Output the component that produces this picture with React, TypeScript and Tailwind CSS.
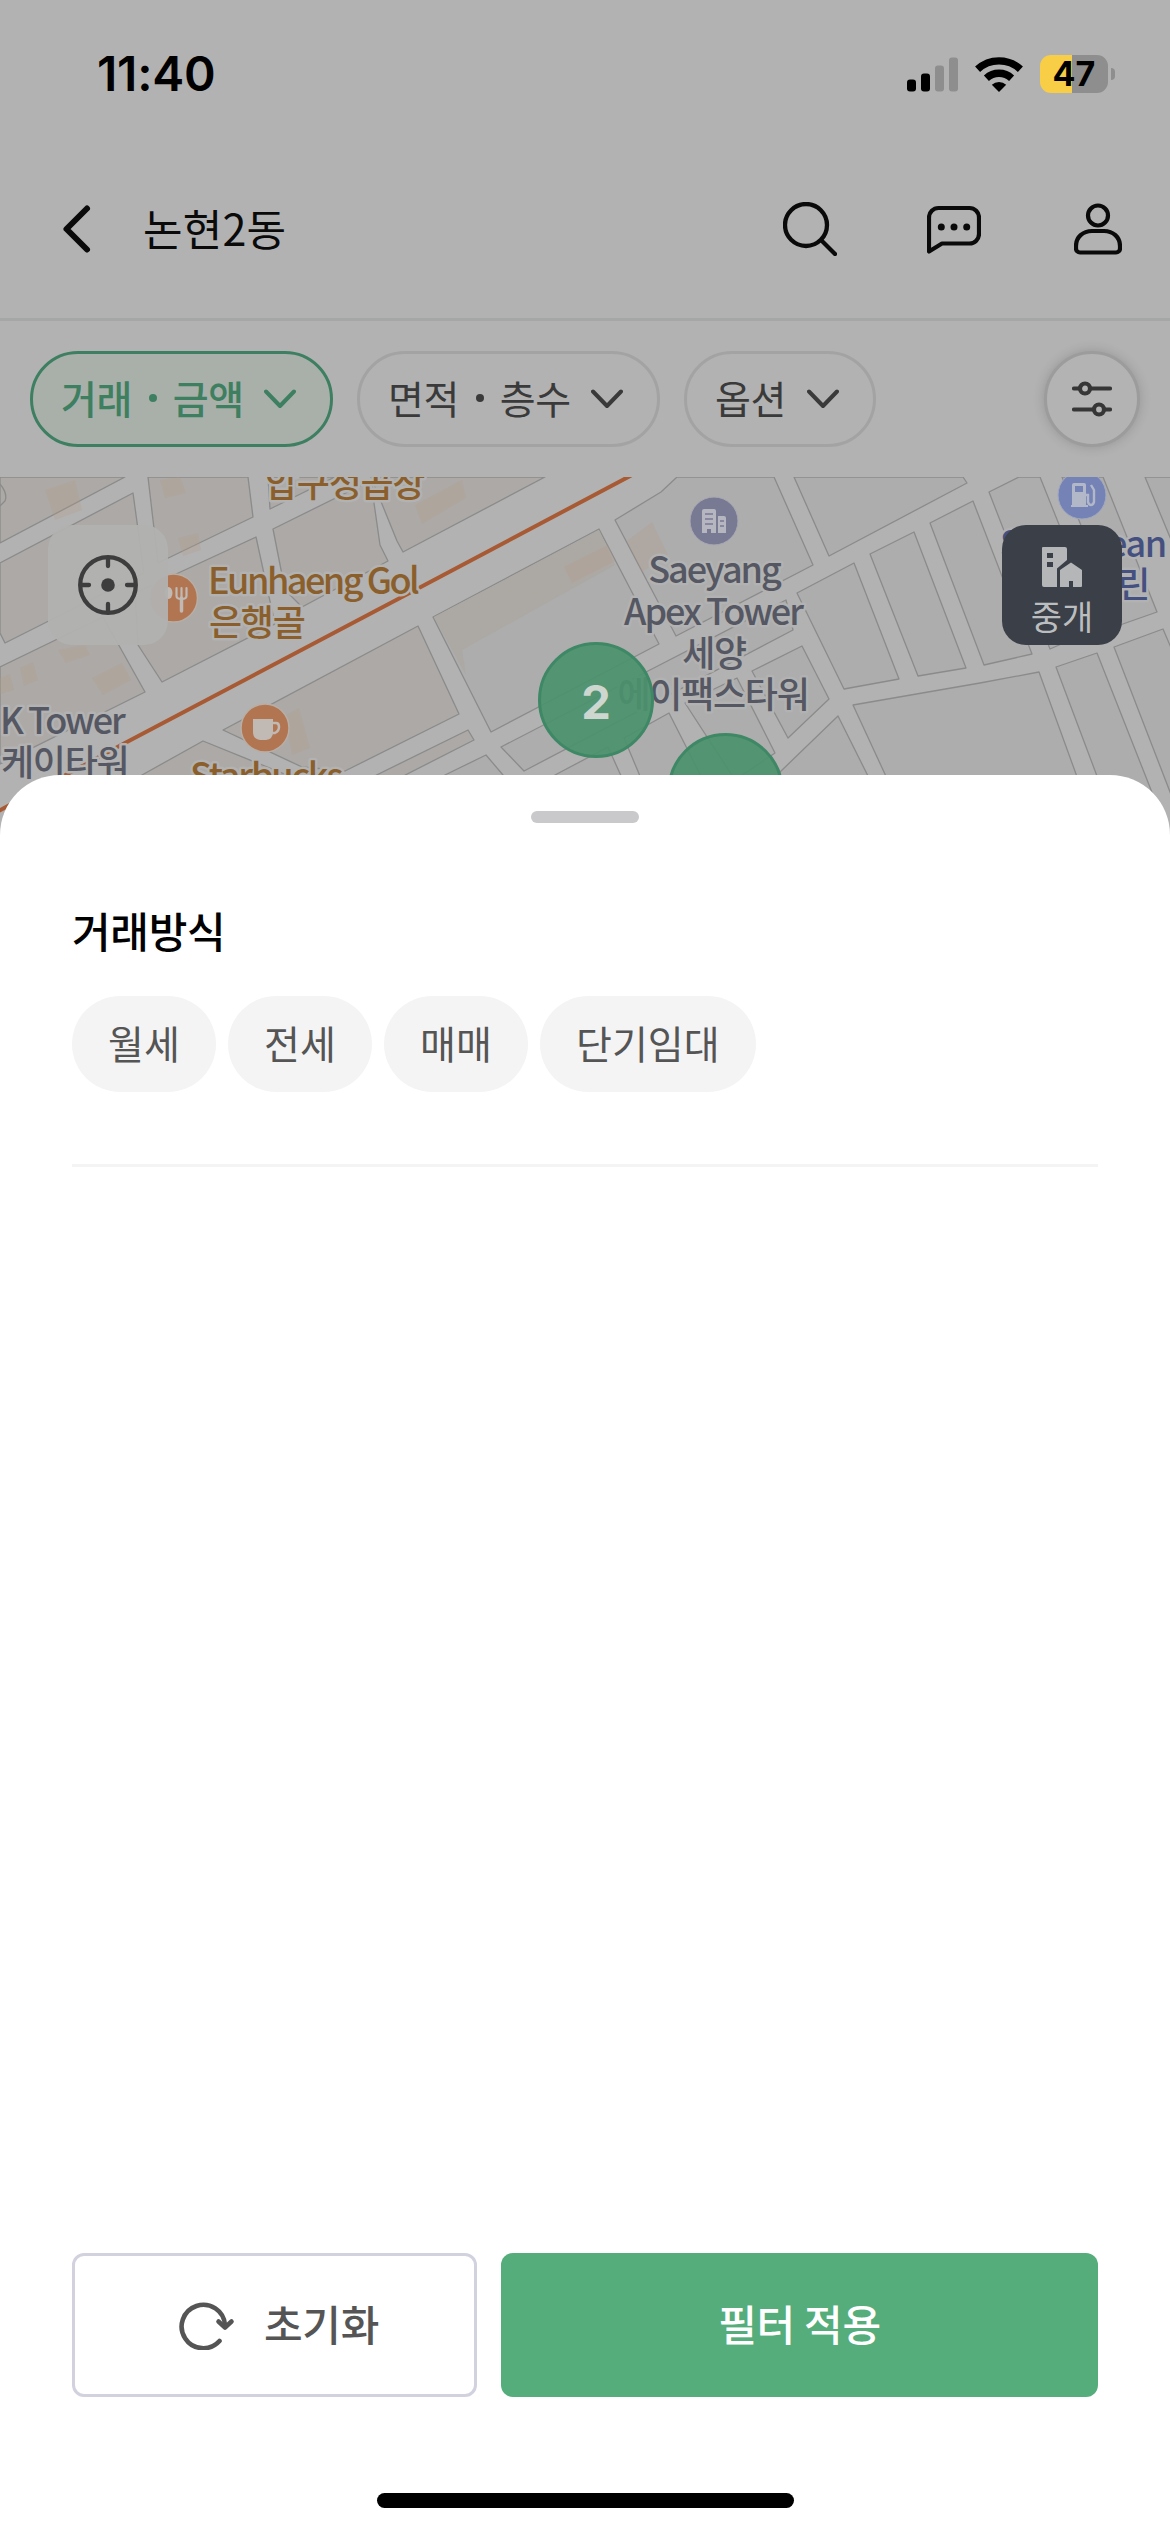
import React from "react";

const KR = "font-['Noto_Sans_CJK_KR','Noto_Sans',sans-serif]";

function StatusBar() {
  return (
    <div className="flex h-[148px] items-center justify-between pr-[55px] pl-[97px]">
      <span className="font-['Inter',sans-serif] text-[48px] leading-none font-semibold tracking-[-0.2px] text-black">
        11:40
      </span>
      <div className="flex items-center">
        <svg width="52" height="36" viewBox="0 0 52 36" className="mr-4">
          <rect x="0" y="23.5" width="9" height="12" rx="3" fill="#000" />
          <rect x="14" y="17.5" width="9" height="18" rx="3" fill="#000" />
          <rect x="28" y="9.5" width="9" height="26" rx="3" fill="#8e8e8e" />
          <rect x="42" y="1.5" width="9" height="34" rx="3" fill="#8e8e8e" />
        </svg>
        <svg width="48" height="36" viewBox="0 0 48 36" className="mr-[17px]">
          <g fill="none" stroke="#000" strokeWidth="7.4">
            <path d="M2.6 13.3a31.5 31.5 0 0 1 42.8 0" />
            <path d="M11.4 22.2a18.6 18.6 0 0 1 25.2 0" />
          </g>
          <path d="M24 36l-7.2-7.3a10.6 10.6 0 0 1 14.4 0z" fill="#000" />
        </svg>
        <div className="flex items-center">
          <div className="flex h-[38px] w-[68px] items-center justify-center rounded-[11px] bg-[linear-gradient(to_right,#f7ce46_32px,#8e8e8e_32px)]">
            <span className="font-['Inter',sans-serif] text-[34px] leading-none font-bold tracking-[0.2px] text-black">
              47
            </span>
          </div>
          <div className="ml-[3px] h-[12px] w-[4px] rounded-r-full bg-[#8e8e8e]" />
        </div>
      </div>
    </div>
  );
}

function NavBar() {
  return (
    <div className="flex h-[173px] items-start border-b-[3px] border-[#a5a7a7] pt-[54px] pl-[62px]">
      <svg width="30" height="54" viewBox="0 0 30 54" fill="none" stroke="#0a0a0a" strokeWidth="6" strokeLinecap="round" strokeLinejoin="round">
        <path d="M25 6.500L4.500 27L25 47.500" />
      </svg>
      <h1 className={`${KR} ml-[51px] h-[54px] text-[43px] leading-[50px] tracking-[0.2px] text-[#0a0a0a]`}>
        논현2동
      </h1>
      <div className="ml-auto flex pr-[48px]">
        <svg width="54" height="54" viewBox="0 0 54 54" fill="none" stroke="#0a0a0a" strokeWidth="4.300" strokeLinecap="round">
          <circle cx="23" cy="23" r="21" />
          <path d="M38.500 38.500L52 52" />
        </svg>
        <svg width="54" height="54" viewBox="0 0 54 54" fill="none" stroke="#0a0a0a" strokeWidth="4.200" strokeLinejoin="round" className="ml-[90px]">
          <path d="M2 49.500V15.500A9.500 9.500 0 0 1 11.500 6H42.500A9.500 9.500 0 0 1 52 15.500V32A9.500 9.500 0 0 1 42.500 41.500H15z" />
          <g fill="#0a0a0a" stroke="none">
            <circle cx="14.300" cy="25" r="3.500" />
            <circle cx="27" cy="25" r="3.500" />
            <circle cx="39.700" cy="25" r="3.500" />
          </g>
        </svg>
        <svg width="48" height="54" viewBox="0 0 48 54" fill="none" stroke="#0a0a0a" strokeWidth="4.200" strokeLinejoin="round" className="ml-[93px]">
          <circle cx="24" cy="13.500" r="10" />
          <path d="M2 44C2 35 9 29 18 29H30C39 29 46 35 46 44V46.500A4 4 0 0 1 42 50.500H6A4 4 0 0 1 2 46.500z" />
        </svg>
      </div>
    </div>
  );
}

function Chevron() {
  return (
    <svg width="32" height="20" viewBox="0 0 32 20" fill="none" stroke="currentColor" strokeWidth="4" strokeLinecap="round" strokeLinejoin="round">
      <path d="M2 2.500L16 17L30 2.500" />
    </svg>
  );
}

function FilterBar() {
  return (
    <div className={`${KR} flex h-[156px] items-start pt-[30px] pl-[30px] text-[39px] font-medium`}>
      <button className="flex h-[96px] w-[303px] items-center justify-between rounded-full border-[3px] border-[#3d7f60] bg-[#a9b0aa] pr-[34px] pl-[28px] text-[#3d7f60]">
        <span className="flex items-center pb-[4px] leading-none tracking-[-0.5px]">
          거래<i className="mt-[2px] mr-[16px] ml-[17px] h-[8px] w-[8px] rounded-full bg-[#3d7f60]" />금액
        </span>
        <Chevron />
      </button>
      <button className="ml-[24px] flex h-[96px] w-[303px] items-center justify-between rounded-full border-[3px] border-[#a3a3a3] pr-[34px] pl-[28px] font-normal text-[#3a3a3a]">
        <span className="flex items-center pb-[4px] leading-none tracking-[-0.5px]">
          면적<i className="mt-[2px] mr-[16px] ml-[17px] h-[8px] w-[8px] rounded-full bg-[#3a3a3a]" />층수
        </span>
        <Chevron />
      </button>
      <button className="ml-[24px] flex h-[96px] w-[192px] items-center justify-between rounded-full border-[3px] border-[#a3a3a3] pr-[34px] pl-[28px] font-normal text-[#3a3a3a]">
        <span className="pb-[4px] leading-none tracking-[-0.5px]">옵션</span>
        <Chevron />
      </button>
      <button className="mr-[30px] ml-auto flex h-[96px] w-[96px] items-center justify-center rounded-full border-[3px] border-[#9c9c9c] bg-[#b3b3b3] shadow-[0_0_12px_rgba(0,0,0,0.16)]">
        <svg width="40" height="36" viewBox="0 0 40 36" fill="none" stroke="#363636" strokeWidth="4.200" strokeLinecap="round">
          <path d="M2 7.500H7M19 7.500H38M2 28.500H21M33 28.500H38" />
          <circle cx="13" cy="7.500" r="5" />
          <circle cx="27" cy="28.500" r="5" />
        </svg>
      </button>
    </div>
  );
}

const warmBlocks = [
  "0,477 125,477 0,543",
  "0,563 133,493 144,573 5,643 0,633",
  "148,477 248,477 253,517 158,563",
  "268,477 335,477 270,509",
  "371,477 545,477 403,552 397,541",
  "135,593 256,537 275,624 162,682 138,645",
  "273,529 372,480 374,503 380,545 388,561 302,607 285,590",
  "0,667 103,617 145,692 0,764",
  "223,730 418,626 459,714 345,771 302,767",
  "142,775 203,741 287,775 300,800 120,800",
  "340,793 468,730 474,740 370,793",
];

const greyBlocks = [
  "433,617 599,529 659,644 491,732",
  "615,520 661,492 677,477 774,477 813,565 676,636",
  "501,747 648,671 786,600 793,630 524,771",
  "752,671 802,646 829,699 788,738",
  "445,775 486,755 503,775 510,790 430,790",
  "555,775 608,747 622,778 622,790 540,790",
  "624,738 669,713 702,778 645,788",
  "685,703 737,678 775,753 735,780",
  "780,772 838,716 870,780 780,780",
  "853,705 980,683 1039,672 1080,785 890,785",
  "1056,667 1097,653 1155,800 1106,800",
  "1114,647 1163,629 1172,650 1172,797",
  "797,593 854,563 899,679 844,689",
  "870,554 914,532 966,668 918,676",
  "930,523 973,501 1032,654 984,665",
  "794,477 963,477 967,483 829,556",
  "989,492 1019,477 1040,477 1100,627 1050,649",
  "1062,477 1103,477 1157,612 1120,625",
  "1145,477 1172,477 1172,542",
];

const tints = [
  "45,490 75,480 82,510 55,520",
  "160,480 180,477 186,493 165,498",
  "178,538 198,533 201,550 183,556",
  "58,650 85,645 90,655 66,663",
  "92,678 122,663 131,680 103,695",
  "20,668 33,662 38,680 24,686",
  "0,678 10,674 14,690 0,694",
  "564,567 608,545 615,561 572,583",
  "415,505 462,480 466,498 422,524",
  "627,541 652,522 668,555 642,572",
  "285,716 299,708 310,748 292,755",
];

function PoiLabel(props: { x: number; y: number; color: string; anchor?: "start" | "middle" | "end"; spacing?: number; children: string }) {
  return (
    <text
      x={props.x}
      y={props.y}
      fill={props.color}
      stroke="#b2b2b2"
      strokeWidth="5"
      strokeLinejoin="round"
      paintOrder="stroke"
      textAnchor={props.anchor ?? "start"}
      letterSpacing={props.spacing ?? -1.3}
    >
      {props.children}
    </text>
  );
}

function MapView() {
  return (
    <div className="relative h-[383px] overflow-hidden bg-[#b2b2b2]">
      <svg width="1170" height="383" viewBox="0 477 1170 383" className={`${KR} block text-[36px] font-medium`}>
        <g stroke="#8b8b8b" strokeWidth="1.300" strokeLinejoin="round">
          {warmBlocks.map((p) => (
            <polygon key={p} points={p} fill="#aca9a6" />
          ))}
          {greyBlocks.map((p) => (
            <polygon key={p} points={p} fill="#adadad" />
          ))}
        </g>
        <polygon points="434,617 599,530 615,565 462,650 466,675" fill="#aca8a4" />
        <g fill="#b59a84" opacity="0.25">
          {tints.map((p) => (
            <polygon key={p} points={p} />
          ))}
        </g>
        <path d="M0 484q8 10 5 17l-5 5" fill="none" stroke="#8b8b8b" strokeWidth="1.300" />
        <path d="M-5 813L125 743L400 598L632 475" fill="none" stroke="#a75a33" strokeWidth="4" />

        <g fill="#b27551" stroke="#b8aea6" strokeWidth="1.500">
          <circle cx="173.500" cy="598" r="24" />
          <circle cx="265" cy="728" r="24" />
        </g>
        <g fill="none" stroke="#c0b9b4" strokeWidth="2.200" strokeLinecap="round">
          <path d="M176.500 588v8q0 3 5 3t5-3v-8M181.500 588v9" />
          <path d="M181.500 598v13" strokeWidth="3.500" />
          <path d="M273 723h3q3 0 3 4t-4 6h-3" strokeWidth="2.500" />
        </g>
        <ellipse cx="168.500" cy="593" rx="4" ry="6" fill="#c0b9b4" />
        <path d="M253 719h20v13q0 7-7 8h-6q-7-1-7-8z" fill="#c0b9b4" />

        <circle cx="714" cy="521" r="24" fill="#787a94" stroke="#a8a8b2" strokeWidth="1" />
        <path d="M702 533v-22q0-2 2-2h10q2 0 2 2v22h-5v-4h-4v4zM718 533v-17h6q2 0 2 2v15z" fill="#b6b6c0" />
        <path d="M705 514h8M705 519h8M705 524h8M720 521h4M720 526h4" stroke="#787a94" strokeWidth="1.600" />

        <circle cx="1082" cy="495" r="24" fill="#7482b5" stroke="#a2a9bf" strokeWidth="1" />
        <path d="M1072 505v-20q0-2 2-2h10q2 0 2 2v20h2v2h-17v-2z" fill="#b3b8c9" />
        <rect x="1075" y="486" width="8" height="6" fill="#7482b5" />
        <path d="M1091 485l3 5v12q-1 3-3 3t-3-3v-7h-2" fill="none" stroke="#b3b8c9" strokeWidth="2.400" />

        <PoiLabel x={265} y={497} color="#8b5f2c">압구정곱창</PoiLabel>
        <PoiLabel x={208} y={594} color="#8b5f2c" spacing={-2.5}>Eunhaeng Gol</PoiLabel>
        <PoiLabel x={209} y={636} color="#8b5f2c">은행골</PoiLabel>
        <PoiLabel x={0} y={734} color="#555763" spacing={-2}>K Tower</PoiLabel>
        <PoiLabel x={1} y={776} color="#555763">케이타워</PoiLabel>
        <PoiLabel x={190} y={789} color="#8b5f2c" spacing={-2.2}>Starbucks</PoiLabel>
        <PoiLabel x={714} y={583} color="#555763" anchor="middle" spacing={-2}>Saeyang</PoiLabel>
        <PoiLabel x={713} y={625} color="#555763" anchor="middle" spacing={-2}>Apex Tower</PoiLabel>
        <PoiLabel x={714} y={667} color="#555763" anchor="middle">세양</PoiLabel>
        <PoiLabel x={713} y={708} color="#555763" anchor="middle">에이팩스타워</PoiLabel>
        <PoiLabel x={1000} y={557} color="#44507f">S</PoiLabel>
        <PoiLabel x={1166} y={557} color="#44507f" anchor="end">ean</PoiLabel>
        <PoiLabel x={1149} y={598} color="#44507f" anchor="end">린</PoiLabel>

        <g fill="#4b916c" fillOpacity="0.92" stroke="#3e8865" strokeWidth="3">
          <circle cx="596" cy="700" r="56.500" />
          <circle cx="725.500" cy="791" r="56.500" />
        </g>
      </svg>

      <span className="absolute top-[200px] left-[566px] w-[60px] text-center font-['Inter',sans-serif] text-[47px] leading-[50px] font-bold text-[#cdd7d0]">
        2
      </span>

      <button className="absolute top-[48px] left-[48px] flex h-[120px] w-[120px] items-center justify-center rounded-[24px] bg-[#b1b1b0]/95">
        <svg width="60" height="60" viewBox="0 0 60 60" fill="none" stroke="#3d3d3d" strokeWidth="4.300" strokeLinecap="round">
          <circle cx="30" cy="30" r="27.800" />
          <path d="M30 3v8M30 49v8M3 30h8M49 30h8" />
          <circle cx="30" cy="30" r="6.800" fill="#3d3d3d" stroke="none" />
        </svg>
      </button>

      <button className="absolute top-[48px] left-[1002px] flex h-[120px] w-[120px] flex-col items-center rounded-[24px] bg-[#3a3f48] pt-[21px]">
        <svg width="42" height="42" viewBox="0 0 42 42" fill="#b5b6b8">
          <path d="M2 1H24q2 0 2 2V14L16 22.500V41H3q-2 0-2-2V2q0-1 1-1zM6 7v5h6V7zM6 16v5h6v-5z" fillRule="evenodd" />
          <path d="M19 41V24L30 16.500L41 24V40q0 1-1 1H32V35H28v6z" />
        </svg>
        <span className={`${KR} mt-[6px] text-[34px] leading-[44px] text-[#bcbdbf]`}>중개</span>
      </button>
    </div>
  );
}

const dealTypes = ["월세", "전세", "매매", "단기임대"];

function FilterSheet() {
  return (
    <section className={`${KR} absolute inset-x-0 top-[775px] bottom-0 flex flex-col rounded-t-[60px] bg-white px-[72px]`}>
      <div className="mt-[36px] h-[12px] w-[108px] self-center rounded-full bg-[#c9c9cc]" />
      <h2 className="mt-[75px] h-[64px] text-[42px] leading-[64px] font-medium tracking-[-0.3px] text-black">거래방식</h2>
      <div className="mt-[34px] flex gap-[12px]">
        {dealTypes.map((t) => (
          <button key={t} className="h-[96px] rounded-full bg-[#f4f4f4] px-[36px] pb-[3px] text-[39px] leading-[91px] tracking-[0.1px] text-[#555]">
            {t}
          </button>
        ))}
      </div>
      <div className="mt-[72px] h-[3px] bg-[#f4f4f4]" />
      <div className="mt-auto flex gap-[24px] text-[42px] font-medium">
        <button className="flex h-[144px] w-[405px] items-center rounded-[12px] border-[3px] border-[#d2d2df] pl-[104px] text-[#555]">
          <svg width="56" height="50" viewBox="0 0 56 50" fill="none" stroke="#555" strokeWidth="4.600" strokeLinecap="round" strokeLinejoin="round">
            <path d="M40.500 41A21.700 21.700 0 1 1 46 25" />
            <path d="M39.500 21.500L46 27.500L52.500 21.500" />
          </svg>
          <span className="ml-[29px] pb-[4px] leading-[134px] tracking-[-0.3px]">초기화</span>
        </button>
        <button className="h-[144px] flex-1 rounded-[12px] bg-[#55ad7b] pb-[4px] leading-[138px] tracking-[-0.3px] text-white">
          필터 적용
        </button>
      </div>
      <div className="mt-[96px] mb-[24px] h-[15px] w-[417px] self-center rounded-full bg-black" />
    </section>
  );
}

export default function App() {
  return (
    <main className="relative h-[2532px] w-[1170px] overflow-hidden bg-[#b2b2b2]">
      <StatusBar />
      <NavBar />
      <FilterBar />
      <MapView />
      <FilterSheet />
    </main>
  );
}
